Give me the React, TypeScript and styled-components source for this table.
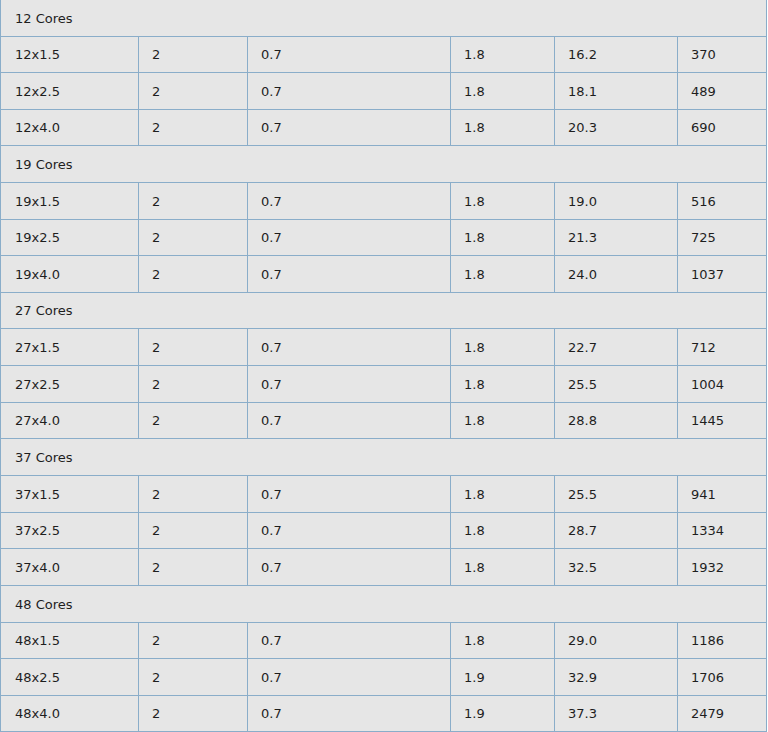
import React from 'react';
import styled, { createGlobalStyle } from 'styled-components';

const GlobalStyle = createGlobalStyle`
  html, body {
    margin: 0;
    padding: 0;
    background: #ffffff;
  }
  body {
    font-family: 'DejaVu Sans', Verdana, sans-serif;
  }
`;

const line = '#8aadc9';

const Table = styled.table`
  width: 767px;
  margin-top: -1px;
  border-collapse: separate;
  border-spacing: 0;
  border-top: 1px solid ${line};
  border-left: 1px solid ${line};
  table-layout: fixed;
  background: #e6e6e6;
  color: #1e1e1e;
  font-size: 13px;
`;

const Row = styled.tr<{ $tall?: boolean }>`
  height: ${(p) => (p.$tall ? 37 : 36)}px;
`;

const Cell = styled.td`
  box-sizing: border-box;
  border-right: 1px solid ${line};
  border-bottom: 1px solid ${line};
  padding: 1px 13px 0;
  vertical-align: middle;
  line-height: 16px;
  white-space: nowrap;
`;

// first column and group titles sit a pixel further in
const LeadCell = styled(Cell)`
  padding-left: 14px;
`;

type Item = {
  size: string;
  a: string;
  b: string;
  c: string;
  d: string;
  e: string;
};

type Group = {
  title: string;
  items: Item[];
};

const groups: Group[] = [
  {
    title: '12 Cores',
    items: [
      { size: '12x1.5', a: '2', b: '0.7', c: '1.8', d: '16.2', e: '370' },
      { size: '12x2.5', a: '2', b: '0.7', c: '1.8', d: '18.1', e: '489' },
      { size: '12x4.0', a: '2', b: '0.7', c: '1.8', d: '20.3', e: '690' },
    ],
  },
  {
    title: '19 Cores',
    items: [
      { size: '19x1.5', a: '2', b: '0.7', c: '1.8', d: '19.0', e: '516' },
      { size: '19x2.5', a: '2', b: '0.7', c: '1.8', d: '21.3', e: '725' },
      { size: '19x4.0', a: '2', b: '0.7', c: '1.8', d: '24.0', e: '1037' },
    ],
  },
  {
    title: '27 Cores',
    items: [
      { size: '27x1.5', a: '2', b: '0.7', c: '1.8', d: '22.7', e: '712' },
      { size: '27x2.5', a: '2', b: '0.7', c: '1.8', d: '25.5', e: '1004' },
      { size: '27x4.0', a: '2', b: '0.7', c: '1.8', d: '28.8', e: '1445' },
    ],
  },
  {
    title: '37 Cores',
    items: [
      { size: '37x1.5', a: '2', b: '0.7', c: '1.8', d: '25.5', e: '941' },
      { size: '37x2.5', a: '2', b: '0.7', c: '1.8', d: '28.7', e: '1334' },
      { size: '37x4.0', a: '2', b: '0.7', c: '1.8', d: '32.5', e: '1932' },
    ],
  },
  {
    title: '48 Cores',
    items: [
      { size: '48x1.5', a: '2', b: '0.7', c: '1.8', d: '29.0', e: '1186' },
      { size: '48x2.5', a: '2', b: '0.7', c: '1.9', d: '32.9', e: '1706' },
      { size: '48x4.0', a: '2', b: '0.7', c: '1.9', d: '37.3', e: '2479' },
    ],
  },
];

const widths = [138, 109, 203, 104, 123, 89];

// rows alternate 36/37px (about 36.6 on average)
const tall = [1, 0, 1, 0, 1, 1, 0, 1, 0, 1, 1, 0, 1, 1, 0, 1, 1, 0, 1, 0];

function App() {
  let idx = 0;
  return (
    <>
      <GlobalStyle />
      <Table>
        <colgroup>
          {widths.map((w, i) => (
            <col key={i} style={{ width: w }} />
          ))}
        </colgroup>
        <tbody>
          {groups.map((g) => (
            <React.Fragment key={g.title}>
              <Row $tall={!!tall[idx++]}>
                <LeadCell colSpan={6}>{g.title}</LeadCell>
              </Row>
              {g.items.map((it) => (
                <Row key={it.size} $tall={!!tall[idx++]}>
                  <LeadCell>{it.size}</LeadCell>
                  <Cell>{it.a}</Cell>
                  <Cell>{it.b}</Cell>
                  <Cell>{it.c}</Cell>
                  <Cell>{it.d}</Cell>
                  <Cell>{it.e}</Cell>
                </Row>
              ))}
            </React.Fragment>
          ))}
        </tbody>
      </Table>
    </>
  );
}

export default App;
